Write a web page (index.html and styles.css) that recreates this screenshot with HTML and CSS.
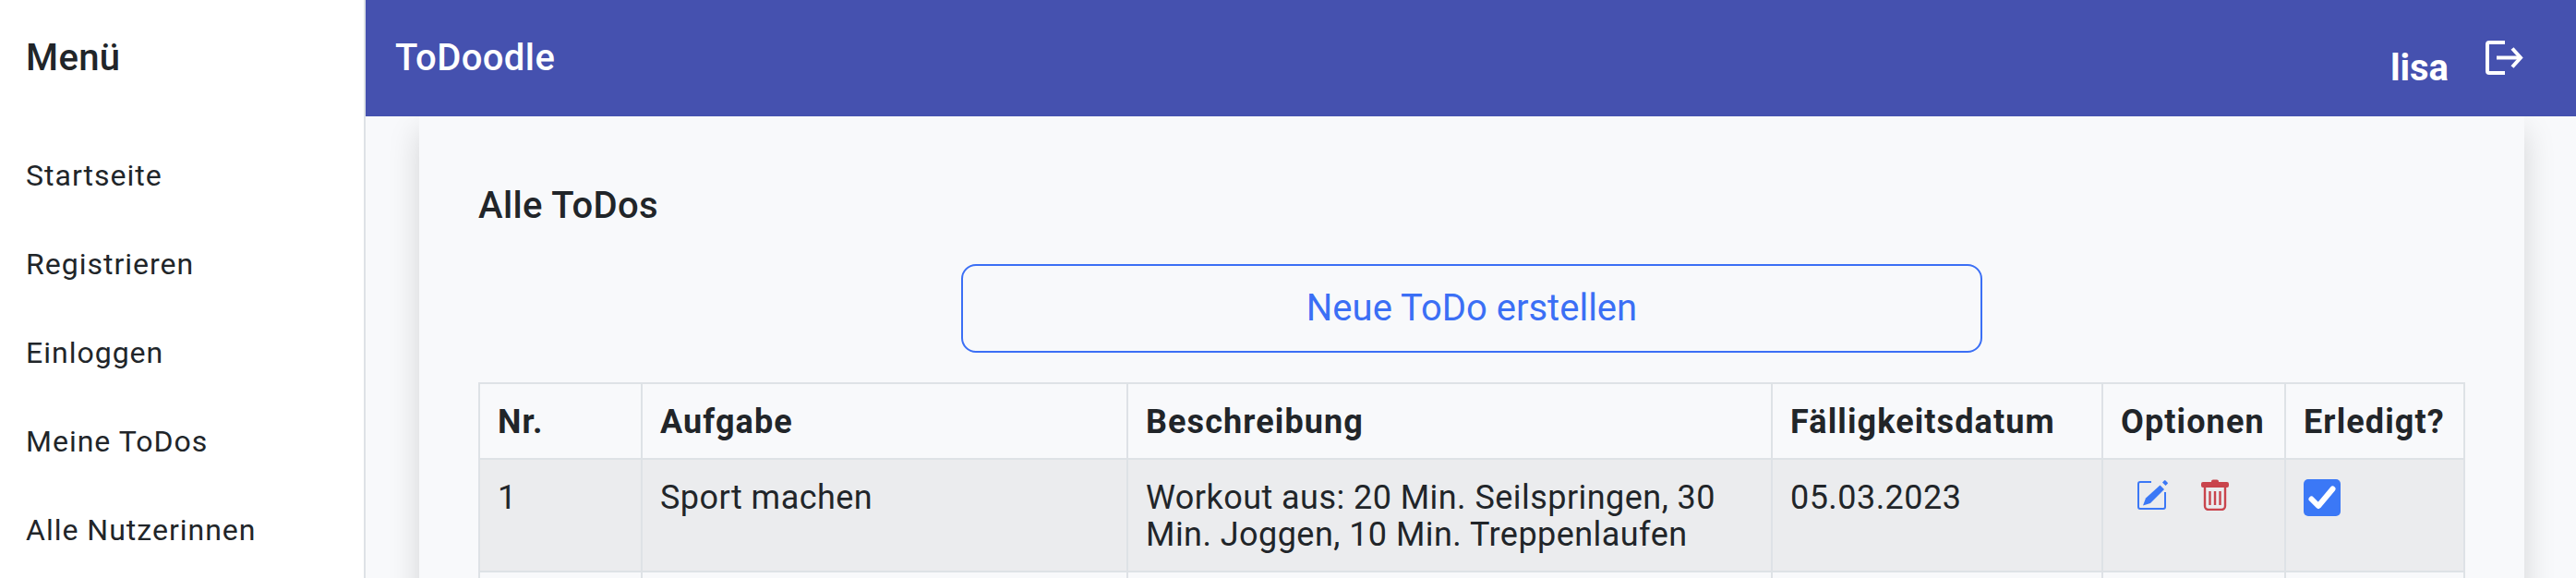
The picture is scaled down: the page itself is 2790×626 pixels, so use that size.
FILE: index.html
```html
<!DOCTYPE html>
<html lang="de">
<head>
    <meta charset="UTF-8">
    <title>ToDoodle</title>
    <link rel="stylesheet" href="styles.css">
</head>
<body>
    <div class="page">
        <aside class="sidebar">
            <h2 class="menu-title">Menü</h2>
            <nav class="menu">
                <a href="#">Startseite</a>
                <a href="#">Registrieren</a>
                <a href="#">Einloggen</a>
                <a href="#">Meine ToDos</a>
                <a href="#">Alle Nutzerinnen</a>
            </nav>
        </aside>
        <div class="main">
            <header class="navbar">
                <span class="brand">ToDoodle</span>
                <div class="user">
                    <span class="user-name">lisa</span>
                    <svg class="logout" viewBox="0 0 41 37" fill="none" stroke="#fff" stroke-width="4">
                        <path d="M21 2H4a2 2 0 0 0-2 2v29a2 2 0 0 0 2 2h17"/>
                        <path d="M12 18.500H38"/>
                        <path d="M29 8.500L38 18.500L29 28.500"/>
                    </svg>
                </div>
            </header>
            <div class="card">
                <h3 class="card-title">Alle ToDos</h3>
                <a class="btn-new" href="#">Neue ToDo erstellen</a>
                <table class="todos">
                    <colgroup>
                        <col class="col-nr">
                        <col class="col-task">
                        <col class="col-desc">
                        <col class="col-date">
                        <col class="col-opt">
                        <col class="col-done">
                    </colgroup>
                    <thead>
                        <tr>
                            <th>Nr.</th>
                            <th>Aufgabe</th>
                            <th>Beschreibung</th>
                            <th>Fälligkeitsdatum</th>
                            <th>Optionen</th>
                            <th>Erledigt?</th>
                        </tr>
                    </thead>
                    <tbody>
                        <tr class="odd">
                            <td>1</td>
                            <td>Sport machen</td>
                            <td>Workout aus: 20 Min. Seilspringen, 30 Min. Joggen, 10 Min. Treppenlaufen</td>
                            <td>05.03.2023</td>
                            <td>
                                <div class="options">
                                    <svg class="icon-edit" viewBox="0 0 33 33">
                                        <path d="M15 3H3a2 2 0 0 0-2 2v25a2 2 0 0 0 2 2h25a2 2 0 0 0 2-2V14" fill="none" stroke="#3b78f6" stroke-width="2"/>
                                        <path d="M24.500 6.500L29 11L14 26L6 28.500L9 20.500Z" fill="#3b78f6"/>
                                        <path d="M27 3.500L29 1.500a1 1 0 0 1 1.500 0L32.500 3.500a1 1 0 0 1 0 1.500L30.500 7Z" fill="#3b78f6"/>
                                    </svg>
                                    <svg class="icon-trash" viewBox="0 0 30 34">
                                        <path d="M11 2.500a2 2 0 0 1 2-2h4a2 2 0 0 1 2 2V3h9a2 2 0 0 1 2 2v2a2 2 0 0 1-2 2H2a2 2 0 0 1-2-2V5a2 2 0 0 1 2-2h9Z" fill="#c9444c"/>
                                        <path d="M4 9V29a4 4 0 0 0 4 4h14a4 4 0 0 0 4-4V9" fill="none" stroke="#c9444c" stroke-width="2.400"/>
                                        <path d="M9.500 13V28M15 13V28M20.500 13V28" fill="none" stroke="#c9444c" stroke-width="2.400"/>
                                    </svg>
                                </div>
                            </td>
                            <td>
                                <span class="check">
                                    <svg viewBox="0 0 40 40"><path d="M8.500 21.500L16 29L31.500 10.500" fill="none" stroke="#fff" stroke-width="6" stroke-linecap="round" stroke-linejoin="round"/></svg>
                                </span>
                            </td>
                        </tr>
                        <tr>
                            <td></td><td></td><td></td><td></td><td></td><td></td>
                        </tr>
                    </tbody>
                </table>
            </div>
        </div>
    </div>
</body>
</html>
```

FILE: styles.css
```css
* {
    box-sizing: border-box;
}

html, body {
    margin: 0;
    height: 100%;
    overflow: hidden;
}

body {
    font-family: Roboto, "Liberation Sans", sans-serif;
    font-size: 32px;
    color: #212529;
    background-color: #f8f9fb;
}

.page {
    display: flex;
    height: 100%;
}

/* sidebar */
.sidebar {
    width: 396px;
    flex-shrink: 0;
    padding: 0 28px;
    background-color: #fff;
    border-right: 2px solid #dee2e6;
}

.menu-title {
    margin: 0;
    height: 126px;
    line-height: 126px;
    font-size: 40px;
    font-weight: 500;
    letter-spacing: 0.4px;
}

.menu {
    display: flex;
    flex-direction: column;
    padding-top: 16px;
}

.menu a {
    height: 96px;
    line-height: 96px;
    font-size: 32px;
    letter-spacing: 1px;
    color: #212529;
    text-decoration: none;
}

/* top bar */
.main {
    flex: 1;
    display: flex;
    flex-direction: column;
    min-width: 0;
}

.navbar {
    position: relative;
    z-index: 2;
    flex-shrink: 0;
    height: 126px;
    display: flex;
    justify-content: space-between;
    align-items: center;
    padding: 0 57px 0 32px;
    background-color: #4551af;
    color: #fff;
}

.brand {
    font-size: 40px;
    font-weight: 500;
    letter-spacing: 0.4px;
    margin-top: -1px;
}

.user {
    display: flex;
    align-items: flex-start;
    gap: 40px;
}

.user-name {
    font-size: 40px;
    font-weight: 700;
    line-height: 47px;
    margin-top: 21px;
}

.logout {
    width: 41px;
    height: 37px;
    margin-top: 15px;
}

/* card */
.card {
    flex: 1;
    margin: 0 56px 0 58px;
    padding: 69px 64px 0;
    background-color: #f8f9fb;
    box-shadow: 0 16px 32px rgba(0, 0, 0, 0.15);
}

.card-title {
    margin: 0;
    font-size: 40px;
    font-weight: 500;
    letter-spacing: 0.4px;
    line-height: 56px;
}

.btn-new {
    display: block;
    width: 1106px;
    height: 96px;
    margin: 35px auto 32px;
    line-height: 92px;
    text-align: center;
    font-size: 40px;
    color: #3b6ff5;
    text-decoration: none;
    border: 2px solid #3b6ff5;
    border-radius: 16px;
}

/* table */
.todos {
    width: 2150px;
    table-layout: fixed;
    border-collapse: collapse;
    border: 2px solid #dee2e6;
    line-height: 40px;
}

.col-nr { width: 176px; }
.col-task { width: 526px; }
.col-desc { width: 698px; }
.col-date { width: 358px; }
.col-opt { width: 198px; }
.col-done { width: 194px; }

.todos th, .todos td {
    padding: 21px 20px 19px 19px;
    border: 2px solid #dee2e6;
    text-align: left;
    vertical-align: top;
    font-size: 36px;
    letter-spacing: 0.45px;
}

.todos th {
    font-weight: 700;
    letter-spacing: 1.1px;
}

.todos .odd td {
    background-color: #ebecee;
}

.options {
    display: flex;
    gap: 36px;
    padding-left: 18px;
}

.icon-edit {
    width: 33px;
    height: 33px;
}

.icon-trash {
    width: 30px;
    height: 34px;
}

.check {
    display: block;
    width: 40px;
    height: 40px;
    background-color: #3b78f6;
    border-radius: 5px;
}

.check svg {
    display: block;
    width: 40px;
    height: 40px;
}
```
